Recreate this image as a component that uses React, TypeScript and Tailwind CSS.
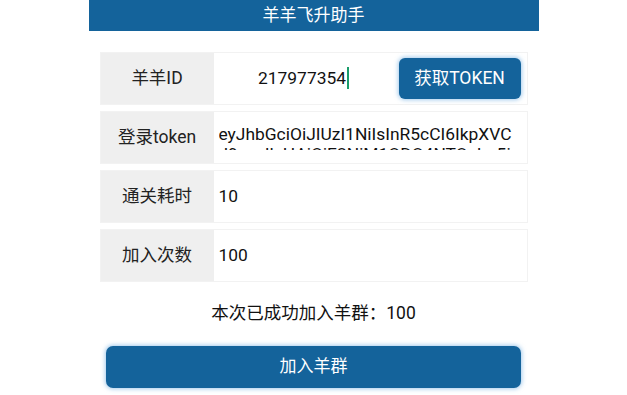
import { useState } from "react";

const font = { fontFamily: 'Roboto, "Noto Sans CJK SC", sans-serif' };

const TOKEN =
  "eyJhbGciOiJIUzI1NiIsInR5cCI6IkpXVCJ9.eyJleHAiOjE2NjM1ODQ4NTQsIm5iZiI6MTY2MjQ4MjY1NCwiaWF0IjoxNjYyNDgwODU0fQ";

function Row({ label, children }: { label: string; children: React.ReactNode }) {
  return (
    <div className="flex h-[53px] border border-[#f2f2f2] bg-white">
      <div className="flex w-[113px] shrink-0 items-center justify-center bg-[#efefef] text-[17.5px] text-[#222]">
        {label}
      </div>
      <div className="flex min-w-0 flex-1 items-center">{children}</div>
    </div>
  );
}

export default function App() {
  const [time, setTime] = useState("10");
  const [count, setCount] = useState("100");

  return (
    <div className="flex min-h-[395px] w-full flex-col items-center bg-white" style={font}>
      {/* Title bar */}
      <div className="flex h-[31px] w-[450px] items-center justify-center bg-[#14639b] text-[17px] text-white">
        羊羊飞升助手
      </div>

      <div className="mt-[21px] flex w-[428px] flex-col gap-[6px]">
        <Row label="羊羊ID">
          {/* id field, shown with its caret */}
          <div className="flex w-[180px] items-center justify-center text-[17.4px] text-[#111]">
            <span>217977354</span>
            <span className="ml-[1px] h-[22px] w-[2px] bg-[#1a9c6a]" />
          </div>
          <button className="ml-auto mr-[6px] h-[41px] w-[122px] rounded-[6px] bg-[#14639b] text-[17.5px] text-white shadow-[0_0_4px_1px_rgba(90,160,220,0.55)]">
            获取TOKEN
          </button>
        </Row>

        <Row label="登录token">
          <div className="h-full w-full pl-[5px] pr-[10px]">
            <div className="h-[38px] overflow-hidden pt-[12px]">
              <p className="break-all text-[17.4px] leading-[20px] text-[#111]">{TOKEN}</p>
            </div>
          </div>
        </Row>

        <Row label="通关耗时">
          <input
            value={time}
            onChange={(e) => setTime(e.target.value)}
            className="w-full bg-transparent pl-[5px] text-[17.4px] text-[#111] outline-none"
          />
        </Row>

        <Row label="加入次数">
          <input
            value={count}
            onChange={(e) => setCount(e.target.value)}
            className="w-full bg-transparent pl-[5px] text-[17.4px] text-[#111] outline-none"
          />
        </Row>
      </div>

      <p className="mt-[19px] text-[17.5px] leading-[24px] text-[#111]">本次已成功加入羊群：100</p>

      <button className="mt-[21px] h-[42px] w-[415px] rounded-[7px] bg-[#14639b] text-[17px] text-white shadow-[0_0_4px_1px_rgba(90,160,220,0.55)]">
        加入羊群
      </button>
    </div>
  );
}
